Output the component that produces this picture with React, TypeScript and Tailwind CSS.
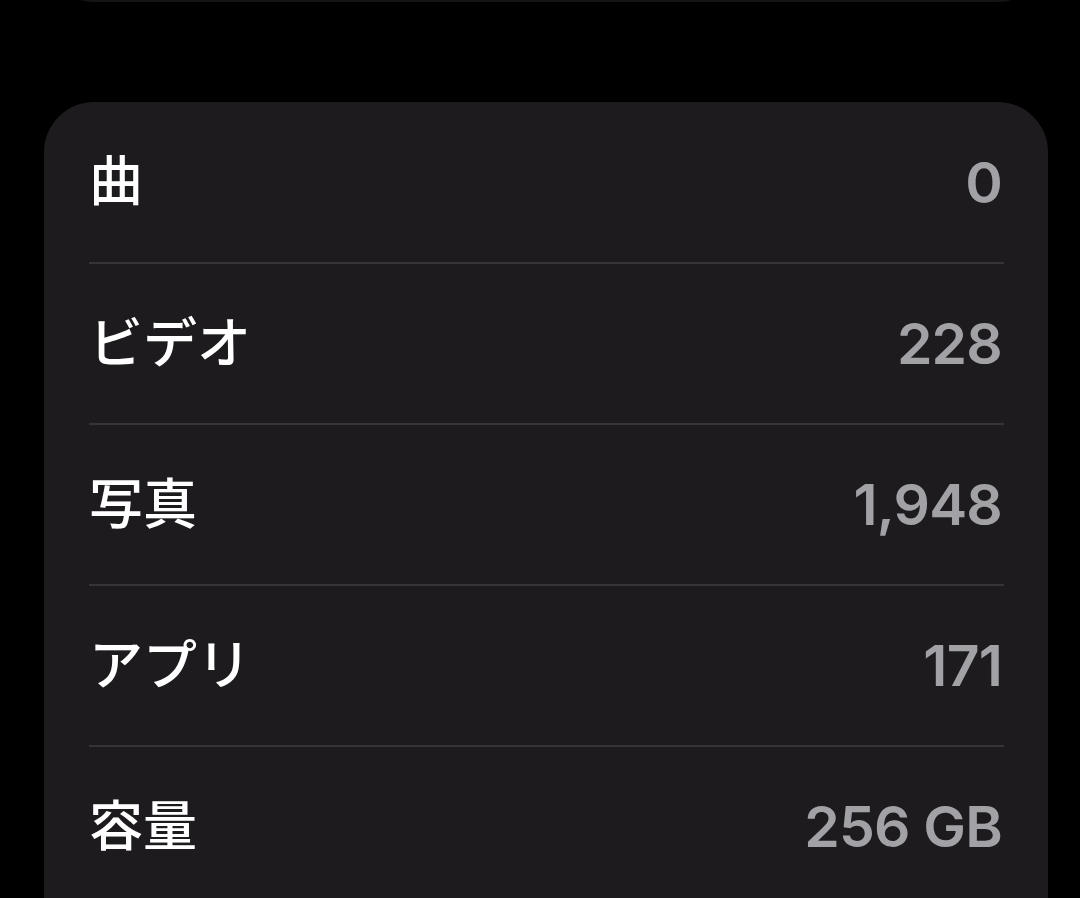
const rows: { label: string; value: string }[] = [
  { label: "曲", value: "0" },
  { label: "ビデオ", value: "228" },
  { label: "写真", value: "1,948" },
  { label: "アプリ", value: "171" },
  { label: "容量", value: "256 GB" },
];

export default function App() {
  return (
    <div className="min-h-[898px] w-[1080px] overflow-hidden bg-black pl-[44px] pr-[32px] font-['Inter','Noto_Sans_CJK_JP',sans-serif]">
      {/* bottom edge of the previous group, mostly scrolled off */}
      <div className="-mt-[98px] h-[100px] rounded-[50px] bg-[#151316]" />

      <section className="mt-[100px] rounded-t-[50px] bg-[#1d1b1e] px-[45px] pr-[44px]">
        {rows.map((row, i) => (
          <div key={row.label}>
            {i > 0 && <div className="h-[2px] bg-[#363438]" />}
            <div
              className={`flex items-center justify-between ${
                i === 0 ? "h-[160px]" : "h-[159px]"
              }`}
            >
              <span className="text-[54px] font-medium leading-none text-white">
                {row.label}
              </span>
              <span className="mr-[2px] text-[57px] font-semibold leading-none tracking-[-0.8px] text-[#a2a1a6]">
                {row.value}
              </span>
            </div>
          </div>
        ))}
      </section>
    </div>
  );
}
